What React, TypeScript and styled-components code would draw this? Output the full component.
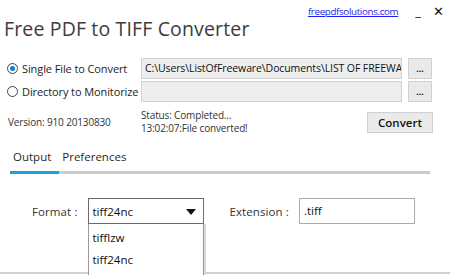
import React from 'react';
import styled, { createGlobalStyle } from 'styled-components';

const GlobalStyle = createGlobalStyle`
  html, body {
    margin: 0;
    padding: 0;
    background: #ffffff;
  }
  body {
    font-family: "Open Sans", "Noto Sans", "Liberation Sans", sans-serif;
    color: #222;
  }
`;

const Window = styled.div`
  width: 450px;
  height: 275px;
  overflow: hidden;
  position: relative;
  background: #fff;
`;

const Header = styled.div`
  display: flex;
  justify-content: space-between;
  align-items: flex-start;
  height: 58px;
`;

const Title = styled.h1`
  margin: 16px 0 0 4px;
  font-size: 19.5px;
  font-weight: 400;
  color: #3c3c3c;
  letter-spacing: 0.15px;
  line-height: 26px;
`;

const Corner = styled.div`
  display: flex;
  align-items: center;
  padding: 2px 6px 0 0;
  height: 18px;
`;

const Link = styled.a`
  font-size: 9.8px;
  color: #1c1cf0;
  text-decoration: underline;
  letter-spacing: -0.35px;
  margin-right: 17px;
`;

const WinButton = styled.span<{ $gap?: number }>`
  font-size: 13px;
  color: #111;
  line-height: 18px;
  margin-right: ${p => p.$gap ?? 0}px;
`;

const SourceGrid = styled.div`
  display: grid;
  grid-template-columns: 128px 261px 24px;
  grid-auto-rows: 21px;
  column-gap: 6px;
  row-gap: 2px;
  padding-left: 7px;
`;

const RadioLabel = styled.label`
  display: flex;
  align-items: center;
  gap: 4px;
  font-size: 11px;
  color: #1e1e1e;
  white-space: nowrap;
  letter-spacing: -0.1px;
`;

const RadioDot = styled.span<{ $checked?: boolean }>`
  width: 9px;
  height: 9px;
  border-radius: 50%;
  border: 1px solid #444;
  display: flex;
  align-items: center;
  justify-content: center;
  flex: none;
  &::after {
    content: '';
    width: 5px;
    height: 5px;
    border-radius: 50%;
    background: ${p => (p.$checked ? '#0a84d8' : 'transparent')};
  }
`;

const PathBox = styled.div`
  background: #eeeeee;
  border: 1px solid #d2d2d2;
  font-size: 10.5px;
  line-height: 19px;
  padding-left: 3px;
  white-space: nowrap;
  overflow: hidden;
  color: #111;
  letter-spacing: -0.1px;
`;

const Button = styled.button<{ $wide?: boolean }>`
  background: #eaeaea;
  border: 1px solid #d0d0d0;
  font-family: inherit;
  font-size: ${p => (p.$wide ? '11.5px' : '9px')};
  font-weight: ${p => (p.$wide ? 600 : 700)};
  color: #111;
  padding: 0;
  overflow: hidden;
  width: ${p => (p.$wide ? '66px' : '24px')};
  height: 21px;
  line-height: 17px;
`;

const StatusRow = styled.div`
  display: grid;
  grid-template-columns: 133px 1fr 66px;
  align-items: center;
  padding: 6px 17px 0 8px;
  height: 28px;
`;

const SmallText = styled.div`
  font-size: 10px;
  color: #333;
  line-height: 13px;
  letter-spacing: -0.15px;
  white-space: nowrap;
`;

const TabBar = styled.div`
  display: flex;
  margin: 13px 20px 0 10px;
  border-bottom: 3px solid #cccccc;
`;

const Tab = styled.div<{ $active?: boolean }>`
  font-size: 11.5px;
  color: #2a2a2a;
  padding: 0 ${p => (p.$active ? 8 : 3)}px 7px 3px;
  margin-bottom: -3px;
  border-bottom: 3px solid ${p => (p.$active ? '#1aa0da' : 'transparent')};
`;

const FormRow = styled.div`
  display: flex;
  align-items: center;
  margin-top: 24px;
  padding-left: 32px;
`;

const FieldLabel = styled.span<{ $gap: number }>`
  font-size: 11.5px;
  color: #333;
  margin-right: ${p => p.$gap}px;
  letter-spacing: 0.1px;
`;

const SelectWrap = styled.div`
  position: relative;
  margin-right: 26px;
`;

const SelectBox = styled.div`
  display: flex;
  align-items: center;
  justify-content: space-between;
  padding: 0 7px 0 4px;
  box-sizing: border-box;
  width: 116px;
  height: 26px;
  border: 1px solid #6a6a6a;
  font-size: 11.5px;
  color: #111;
`;

const Arrow = styled.span`
  width: 0;
  height: 0;
  border-left: 5px solid transparent;
  border-right: 5px solid transparent;
  border-top: 6px solid #111;
  margin-top: 2px;
`;

const DropList = styled.ul`
  position: absolute;
  top: 26px;
  left: 0;
  width: 116px;
  box-sizing: border-box;
  margin: 0;
  padding: 3px 0 0 0;
  list-style: none;
  background: #fff;
  border: 1px solid #9a9a9a;
  border-top: none;
  box-shadow: 2px 0 0 #d8d8d8;
  z-index: 2;
`;

const DropItem = styled.li`
  font-size: 11.5px;
  color: #111;
  padding-left: 4px;
  height: 21.5px;
  line-height: 21px;
`;

const TextBox = styled.div`
  width: 116px;
  height: 26px;
  box-sizing: border-box;
  border: 1px solid #acacac;
  font-size: 11.5px;
  line-height: 24px;
  padding-left: 4px;
  color: #111;
`;

const PanelEdge = styled.div`
  position: absolute;
  left: 0;
  right: 0;
  top: 272px;
  border-top: 2px solid #cfcfcf;
`;

export default function App() {
  return (
    <Window>
      <GlobalStyle />
      <Header>
        <Title>Free PDF to TIFF Converter</Title>
        <Corner>
          <Link href="#">freepdfsolutions.com</Link>
          <WinButton $gap={12}>_</WinButton>
          <WinButton>✕</WinButton>
        </Corner>
      </Header>

      <SourceGrid>
        <RadioLabel>
          <RadioDot $checked />
          Single File to Convert
        </RadioLabel>
        <PathBox>C:\Users\ListOfFreeware\Documents\LIST OF FREEWARE\PDF</PathBox>
        <Button>...</Button>
        <RadioLabel>
          <RadioDot />
          Directory to Monitorize
        </RadioLabel>
        <PathBox />
        <Button>...</Button>
      </SourceGrid>

      <StatusRow>
        <SmallText>Version: 910 20130830</SmallText>
        <SmallText>
          Status: Completed...
          <br />
          13:02:07:File converted!
        </SmallText>
        <Button $wide>Convert</Button>
      </StatusRow>

      <TabBar>
        <Tab $active>Output</Tab>
        <Tab>Preferences</Tab>
      </TabBar>

      <FormRow>
        <FieldLabel $gap={10}>Format :</FieldLabel>
        <SelectWrap>
          <SelectBox>
            tiff24nc
            <Arrow />
          </SelectBox>
          <DropList>
            <DropItem>tifflzw</DropItem>
            <DropItem>tiff24nc</DropItem>
            <DropItem>tiff32nc</DropItem>
          </DropList>
        </SelectWrap>
        <FieldLabel $gap={10}>Extension :</FieldLabel>
        <TextBox>.tiff</TextBox>
      </FormRow>
      <PanelEdge />
    </Window>
  );
}
